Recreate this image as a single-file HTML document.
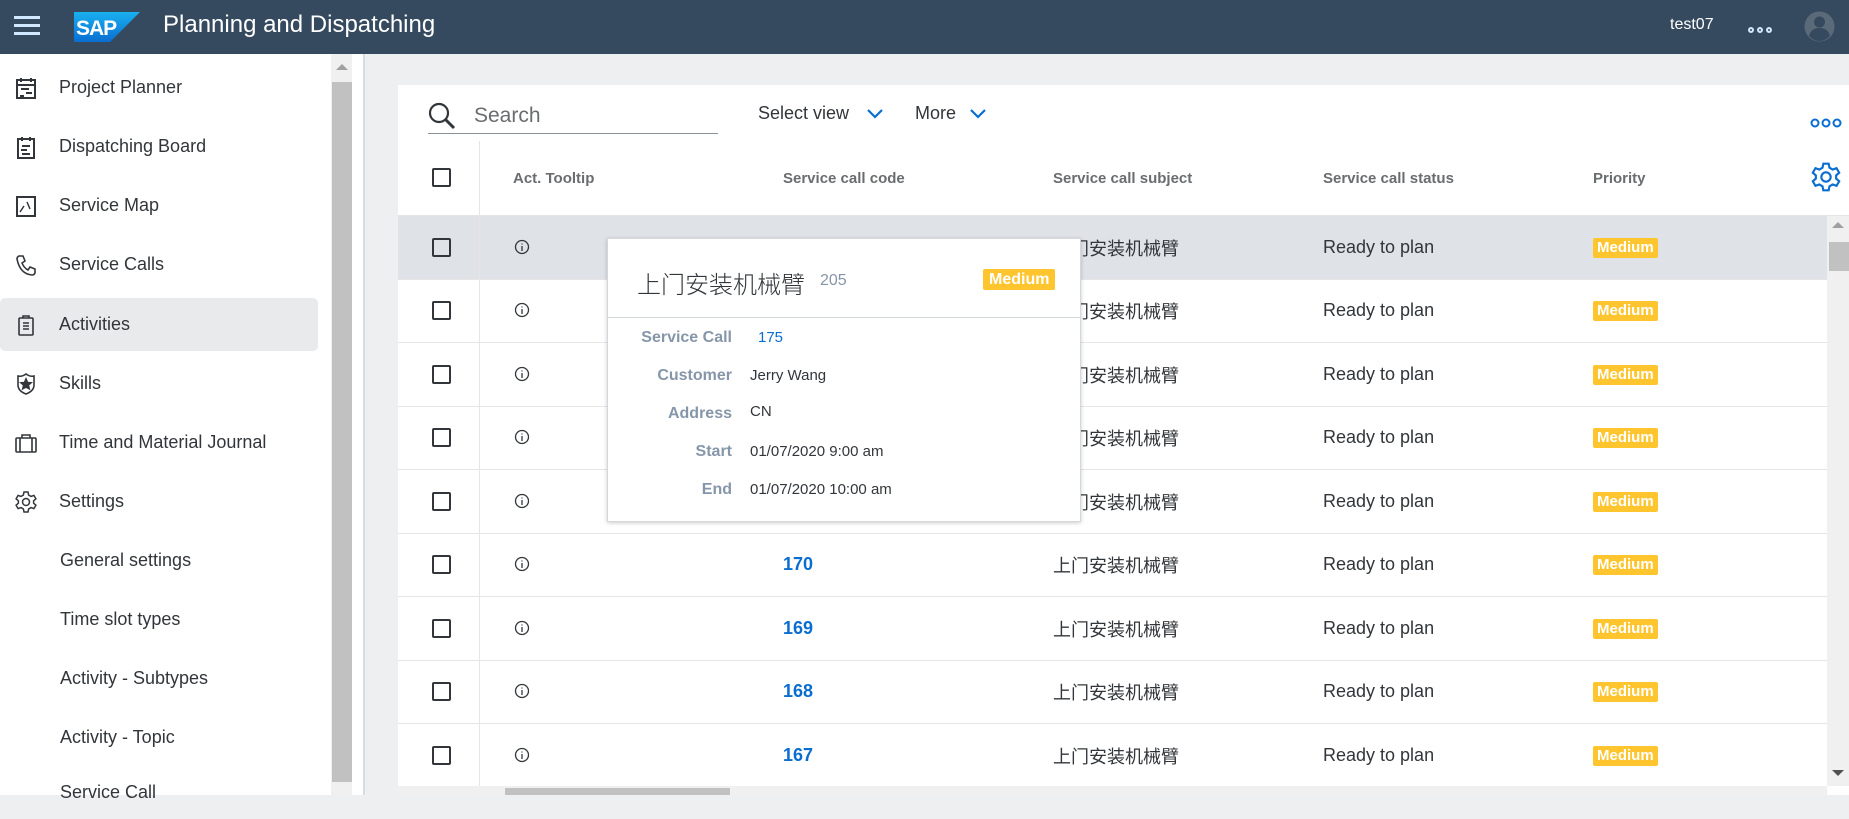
<!DOCTYPE html>
<html><head><meta charset="utf-8"><style>
*{box-sizing:border-box;margin:0;padding:0}
body{width:1849px;height:795px;overflow:hidden;background:#edeff0;font-family:"Liberation Sans","Noto Sans CJK SC",sans-serif;position:relative;color:#32363a;white-space:nowrap}
.hdr{position:absolute;left:0;top:0;width:1849px;height:54px;background:#354a5f}
.side{position:absolute;left:0;top:54px;width:331px;height:741px;background:#fff}
.sb{position:absolute;left:331px;top:54px;width:21px;height:741px;background:#f0f0f0}
.sbt{position:absolute;left:332px;top:82px;width:20px;height:700px;background:#c1c1c1}
.div{position:absolute;left:352px;top:54px;width:13px;height:741px;background:#fff;border-right:2px solid #d9dcdf}
.nav{position:absolute;left:0;height:53px;width:318px;display:flex;align-items:center;font-size:18px;color:#32363a}
.nav svg{position:absolute;left:14px}
.nav span{position:absolute;left:59px}
.sel{background:#e9eaec;border-radius:5px}
.card{position:absolute;left:398px;top:85px;width:1451px;height:710px;background:#fff}
.abs{position:absolute}
.row{position:absolute;left:398px;width:1429px;height:64px;border-bottom:1px solid #e5e5e5}
.rc{position:absolute;left:0;width:1849px;height:64px}
.cb{position:absolute;left:34px;width:19px;height:19px;border:2px solid #32363a;border-radius:2px}
.cell{position:absolute;font-size:18px;color:#32363a;white-space:nowrap}
.badge{position:absolute;background:#ffc52f;color:#fff;font-weight:bold;font-size:15px;padding:1px 4px;border-radius:2px;line-height:18px}
.th{position:absolute;top:170px;font-size:15px;font-weight:bold;color:#6a6d70}
.pl{position:absolute;right:0;width:130px;text-align:right;font-size:16px;font-weight:bold;color:#8696a9}
.pv{position:absolute;left:142px;font-size:15px;color:#32363a}
</style></head><body>
<div class="hdr">
<div class="abs" style="left:14px;top:16px;width:26px;height:3px;background:#d1e8ff;box-shadow:0 8px 0 #d1e8ff,0 16px 0 #d1e8ff"></div>
<svg class="abs" style="left:74px;top:12px" width="66" height="30" viewBox="0 0 66 30"><defs><linearGradient id="g" x1="0" y1="0" x2="0" y2="1"><stop offset="0" stop-color="#1ab0f0"/><stop offset="1" stop-color="#0a6ed1"/></linearGradient></defs><polygon points="0,0 66,0 36,30 0,30" fill="url(#g)"/><text x="2" y="23" font-family="Liberation Sans" font-weight="bold" font-size="21" fill="#fff" letter-spacing="-1">SAP</text></svg>
<div class="abs" style="left:163px;top:11px;font-size:24px;color:#fff">Planning and Dispatching</div>
<div class="abs" style="left:1670px;top:16px;font-size:16px;color:#fff">test07</div>
<div class="abs" style="left:1748px;top:27px;width:6px;height:6px;border:2px solid #d1e8ff;border-radius:50%"></div>
<div class="abs" style="left:1757px;top:27px;width:6px;height:6px;border:2px solid #d1e8ff;border-radius:50%"></div>
<div class="abs" style="left:1766px;top:27px;width:6px;height:6px;border:2px solid #d1e8ff;border-radius:50%"></div>
<svg class="abs" style="left:1804px;top:11px" width="31" height="31" viewBox="0 0 31 31"><circle cx="15.5" cy="15.5" r="15" fill="#5b6a78"/><circle cx="15.5" cy="11" r="5.5" fill="#354a5f"/><path d="M5 25 Q7 17 15.5 17 Q24 17 26 25 Q21 30 15.5 30 Q10 30 5 25Z" fill="#354a5f"/></svg>
</div>

<div class="side">
<div class="nav" style="top:7px"><svg width="24" height="24" viewBox="0 0 24 24" fill="none" stroke="#32363a" stroke-width="2"><rect x="3" y="4" width="18" height="18"/><path d="M7 2v4M17 2v4M3 9h18M7 13h8M12 17h6M6 20h4"/></svg><span>Project Planner</span></div>
<div class="nav" style="top:66px"><svg width="24" height="24" viewBox="0 0 24 24" fill="none" stroke="#32363a" stroke-width="2"><rect x="4" y="4" width="16" height="19"/><path d="M8 2v4M16 2v4M8 11h8M7 15h6M8 19h8"/></svg><span>Dispatching Board</span></div>
<div class="nav" style="top:125px"><svg width="24" height="24" viewBox="0 0 24 24" fill="none" stroke="#32363a" stroke-width="2"><rect x="3" y="3" width="18" height="19"/><path d="M6 18l4-6M13 8l3 7" stroke-width="1.5"/></svg><span>Service Map</span></div>
<div class="nav" style="top:184px"><svg width="24" height="24" viewBox="0 0 24 24" fill="none" stroke="#32363a" stroke-width="1.6"><path d="M5 3l4 0 2 5-3 2q2 5 6 7l2-3 5 2 0 4q-1 2-3 2Q6 21 3 6q0-2 2-3z"/></svg><span>Service Calls</span></div>
<div class="nav sel" style="top:244px"><svg width="24" height="24" viewBox="0 0 24 24" fill="none" stroke="#32363a" stroke-width="1.6"><rect x="5" y="5" width="14" height="17" rx="1"/><path d="M9 5V3h6v2M9 10h6M9 13h6M9 16h6"/></svg><span>Activities</span></div>
<div class="nav" style="top:303px"><svg width="24" height="24" viewBox="0 0 24 24" fill="none" stroke="#32363a" stroke-width="1.6"><path d="M4 4q4 1 8-2 4 3 8 2v9q0 6-8 9-8-3-8-9z"/><path d="M12 7l1.5 3.5 3.5.3-2.7 2.3.9 3.6L12 15l-3.2 1.7.9-3.6L7 10.8l3.5-.3z" fill="#32363a"/></svg><span>Skills</span></div>
<div class="nav" style="top:362px"><svg width="24" height="24" viewBox="0 0 24 24" fill="none" stroke="#32363a" stroke-width="1.6"><rect x="2" y="7" width="20" height="14" rx="1"/><path d="M8 7V4h8v3M6 7v14M18 7v14"/></svg><span>Time and Material Journal</span></div>
<div class="nav" style="top:421px"><svg width="24" height="24" viewBox="0 0 24 24" fill="none" stroke="#32363a" stroke-width="1.5"><circle cx="12" cy="12" r="3.5"/><path d="M10 2h4l.6 3 2.4 1.4 2.9-1 2 3.4-2.3 2v2.4l2.3 2-2 3.4-2.9-1L14.6 19 14 22h-4l-.6-3L7 17.6l-2.9 1-2-3.4 2.3-2v-2.4l-2.3-2 2-3.4 2.9 1L9.4 5z"/></svg><span>Settings</span></div>
<div class="nav" style="top:480px"><span style="left:60px">General settings</span></div>
<div class="nav" style="top:539px"><span style="left:60px">Time slot types</span></div>
<div class="nav" style="top:598px"><span style="left:60px">Activity - Subtypes</span></div>
<div class="nav" style="top:657px"><span style="left:60px">Activity - Topic</span></div>
<div class="nav" style="top:712px"><span style="left:60px">Service Call</span></div>
</div>
<div class="sb"></div><div class="sbt"></div>
<div class="abs" style="left:336px;top:64px;width:0;height:0;border-left:6px solid transparent;border-right:6px solid transparent;border-bottom:6px solid #a0a0a0"></div>
<div class="div"></div>

<div class="card"></div>
<svg class="abs" style="left:428px;top:102px" width="28" height="28" viewBox="0 0 28 28" fill="none" stroke="#32363a" stroke-width="2.2"><circle cx="11" cy="11" r="9"/><path d="M17.5 17.5L26 26" stroke-width="3"/></svg>
<div class="abs" style="left:474px;top:104px;font-size:21px;color:#6a6d70">Search</div>
<div class="abs" style="left:428px;top:133px;width:290px;height:1px;background:#89919a"></div>
<div class="abs" style="left:758px;top:103px;font-size:18px;color:#32363a">Select view</div>
<svg class="abs" style="left:866px;top:108px" width="18" height="12" viewBox="0 0 18 12"><path d="M2 2l7 7 7-7" fill="none" stroke="#0a6ed1" stroke-width="2.2"/></svg>
<div class="abs" style="left:915px;top:103px;font-size:18px;color:#32363a">More</div>
<svg class="abs" style="left:969px;top:108px" width="18" height="12" viewBox="0 0 18 12"><path d="M2 2l7 7 7-7" fill="none" stroke="#0a6ed1" stroke-width="2.2"/></svg>
<svg class="abs" style="left:1810px;top:117px" width="32" height="12" viewBox="0 0 32 12" fill="none" stroke="#0a6ed1" stroke-width="2"><circle cx="5" cy="6" r="3.5"/><circle cx="16" cy="6" r="3.5"/><circle cx="27" cy="6" r="3.5"/></svg>
<svg class="abs" style="left:1810px;top:161px" width="32" height="32" viewBox="0 0 24 24" fill="none" stroke="#0a6ed1" stroke-width="1.6"><circle cx="12" cy="12" r="3.5"/><path d="M10 2h4l.6 3 2.4 1.4 2.9-1 2 3.4-2.3 2v2.4l2.3 2-2 3.4-2.9-1L14.6 19 14 22h-4l-.6-3L7 17.6l-2.9 1-2-3.4 2.3-2v-2.4l-2.3-2 2-3.4 2.9 1L9.4 5z"/></svg>

<div class="abs" style="left:432px;top:168px;width:19px;height:19px;border:2px solid #32363a;border-radius:2px"></div>
<div class="abs" style="left:479px;top:141px;width:1px;height:75px;background:#e5e5e5"></div>
<div class="th" style="left:513px">Act. Tooltip</div>
<div class="th" style="left:783px">Service call code</div>
<div class="th" style="left:1053px">Service call subject</div>
<div class="th" style="left:1323px">Service call status</div>
<div class="th" style="left:1593px">Priority</div>
<div class="abs" style="left:398px;top:215px;width:1451px;height:1px;background:#e5e5e5"></div>

<div class="row" style="top:216px;background:#dfe3e7"></div>
<div class="row" style="top:279px"></div>
<div class="row" style="top:343px"></div>
<div class="row" style="top:406px"></div>
<div class="row" style="top:470px"></div>
<div class="row" style="top:533px"></div>
<div class="row" style="top:597px"></div>
<div class="row" style="top:660px"></div>
<div class="row" style="top:724px"></div>
<div class="abs" style="left:479px;top:216px;width:1px;height:570px;background:#e5e5e5"></div>

<div class="rc" style="top:216px">
<div class="cb" style="left:432px;top:22px"></div><svg class="abs" style="left:514px;top:23px" width="16" height="16" viewBox="0 0 16 16" fill="none" stroke="#32363a" stroke-width="1.3"><circle cx="8" cy="8" r="6.5"/><path d="M8 7v5M8 4.5v1"/></svg>
<div class="cell" style="left:1053px;top:19px">上门安装机械臂</div><div class="cell" style="left:1323px;top:21px">Ready to plan</div><div class="badge" style="left:1593px;top:22px">Medium</div></div>
<div class="rc" style="top:279px">
<div class="cb" style="left:432px;top:22px"></div><svg class="abs" style="left:514px;top:23px" width="16" height="16" viewBox="0 0 16 16" fill="none" stroke="#32363a" stroke-width="1.3"><circle cx="8" cy="8" r="6.5"/><path d="M8 7v5M8 4.5v1"/></svg>
<div class="cell" style="left:1053px;top:19px">上门安装机械臂</div><div class="cell" style="left:1323px;top:21px">Ready to plan</div><div class="badge" style="left:1593px;top:22px">Medium</div></div>
<div class="rc" style="top:343px">
<div class="cb" style="left:432px;top:22px"></div><svg class="abs" style="left:514px;top:23px" width="16" height="16" viewBox="0 0 16 16" fill="none" stroke="#32363a" stroke-width="1.3"><circle cx="8" cy="8" r="6.5"/><path d="M8 7v5M8 4.5v1"/></svg>
<div class="cell" style="left:1053px;top:19px">上门安装机械臂</div><div class="cell" style="left:1323px;top:21px">Ready to plan</div><div class="badge" style="left:1593px;top:22px">Medium</div></div>
<div class="rc" style="top:406px">
<div class="cb" style="left:432px;top:22px"></div><svg class="abs" style="left:514px;top:23px" width="16" height="16" viewBox="0 0 16 16" fill="none" stroke="#32363a" stroke-width="1.3"><circle cx="8" cy="8" r="6.5"/><path d="M8 7v5M8 4.5v1"/></svg>
<div class="cell" style="left:1053px;top:19px">上门安装机械臂</div><div class="cell" style="left:1323px;top:21px">Ready to plan</div><div class="badge" style="left:1593px;top:22px">Medium</div></div>
<div class="rc" style="top:470px">
<div class="cb" style="left:432px;top:22px"></div><svg class="abs" style="left:514px;top:23px" width="16" height="16" viewBox="0 0 16 16" fill="none" stroke="#32363a" stroke-width="1.3"><circle cx="8" cy="8" r="6.5"/><path d="M8 7v5M8 4.5v1"/></svg>
<div class="cell" style="left:1053px;top:19px">上门安装机械臂</div><div class="cell" style="left:1323px;top:21px">Ready to plan</div><div class="badge" style="left:1593px;top:22px">Medium</div></div>
<div class="rc" style="top:533px">
<div class="cb" style="left:432px;top:22px"></div><svg class="abs" style="left:514px;top:23px" width="16" height="16" viewBox="0 0 16 16" fill="none" stroke="#32363a" stroke-width="1.3"><circle cx="8" cy="8" r="6.5"/><path d="M8 7v5M8 4.5v1"/></svg>
<div class="cell" style="left:783px;top:21px;color:#0a6ed1;font-weight:bold">170</div>
<div class="cell" style="left:1053px;top:19px">上门安装机械臂</div><div class="cell" style="left:1323px;top:21px">Ready to plan</div><div class="badge" style="left:1593px;top:22px">Medium</div></div>
<div class="rc" style="top:597px">
<div class="cb" style="left:432px;top:22px"></div><svg class="abs" style="left:514px;top:23px" width="16" height="16" viewBox="0 0 16 16" fill="none" stroke="#32363a" stroke-width="1.3"><circle cx="8" cy="8" r="6.5"/><path d="M8 7v5M8 4.5v1"/></svg>
<div class="cell" style="left:783px;top:21px;color:#0a6ed1;font-weight:bold">169</div>
<div class="cell" style="left:1053px;top:19px">上门安装机械臂</div><div class="cell" style="left:1323px;top:21px">Ready to plan</div><div class="badge" style="left:1593px;top:22px">Medium</div></div>
<div class="rc" style="top:660px">
<div class="cb" style="left:432px;top:22px"></div><svg class="abs" style="left:514px;top:23px" width="16" height="16" viewBox="0 0 16 16" fill="none" stroke="#32363a" stroke-width="1.3"><circle cx="8" cy="8" r="6.5"/><path d="M8 7v5M8 4.5v1"/></svg>
<div class="cell" style="left:783px;top:21px;color:#0a6ed1;font-weight:bold">168</div>
<div class="cell" style="left:1053px;top:19px">上门安装机械臂</div><div class="cell" style="left:1323px;top:21px">Ready to plan</div><div class="badge" style="left:1593px;top:22px">Medium</div></div>
<div class="rc" style="top:724px">
<div class="cb" style="left:432px;top:22px"></div><svg class="abs" style="left:514px;top:23px" width="16" height="16" viewBox="0 0 16 16" fill="none" stroke="#32363a" stroke-width="1.3"><circle cx="8" cy="8" r="6.5"/><path d="M8 7v5M8 4.5v1"/></svg>
<div class="cell" style="left:783px;top:21px;color:#0a6ed1;font-weight:bold">167</div>
<div class="cell" style="left:1053px;top:19px">上门安装机械臂</div><div class="cell" style="left:1323px;top:21px">Ready to plan</div><div class="badge" style="left:1593px;top:22px">Medium</div></div>

<div class="abs" style="left:1827px;top:216px;width:22px;height:570px;background:#f0f0f0"></div>
<div class="abs" style="left:1829px;top:242px;width:20px;height:29px;background:#c1c1c1"></div>
<div class="abs" style="left:1832px;top:222px;border-left:6px solid transparent;border-right:6px solid transparent;border-bottom:6px solid #a0a0a0"></div>
<div class="abs" style="left:1832px;top:770px;border-left:6px solid transparent;border-right:6px solid transparent;border-top:6px solid #505050"></div>
<div class="abs" style="left:398px;top:786px;width:1429px;height:9px;background:#f0f0f0"></div>
<div class="abs" style="left:505px;top:788px;width:225px;height:7px;background:#c1c1c1"></div>

<div class="abs" style="left:607px;top:238px;width:474px;height:284px;background:#fff;border:1px solid #d5d8db;box-shadow:0 1px 4px rgba(0,0,0,.2)">
<div class="abs" style="left:29px;top:26px;font-size:24px;color:#32363a;font-weight:300">上门安装机械臂</div>
<div class="abs" style="left:212px;top:33px;font-size:16px;color:#8696a9">205</div>
<div class="badge" style="left:375px;top:30px;font-size:16px;line-height:19px;padding:1px 6px">Medium</div>
<div class="abs" style="left:0;top:78px;width:472px;height:1px;background:#d5d8db"></div>
<div class="abs" style="left:0;top:90px;width:472px">
<div class="pl" style="right:348px;top:0">Service Call</div><div class="pv" style="left:150px;top:0;color:#0a6ed1">175</div>
<div class="pl" style="right:348px;top:38px">Customer</div><div class="pv" style="top:38px">Jerry Wang</div>
<div class="pl" style="right:348px;top:76px">Address</div><div class="pv" style="top:74px">CN</div>
<div class="pl" style="right:348px;top:114px">Start</div><div class="pv" style="top:114px">01/07/2020 9:00 am</div>
<div class="pl" style="right:348px;top:152px">End</div><div class="pv" style="top:152px">01/07/2020 10:00 am</div>
</div>
</div>
</body></html>
